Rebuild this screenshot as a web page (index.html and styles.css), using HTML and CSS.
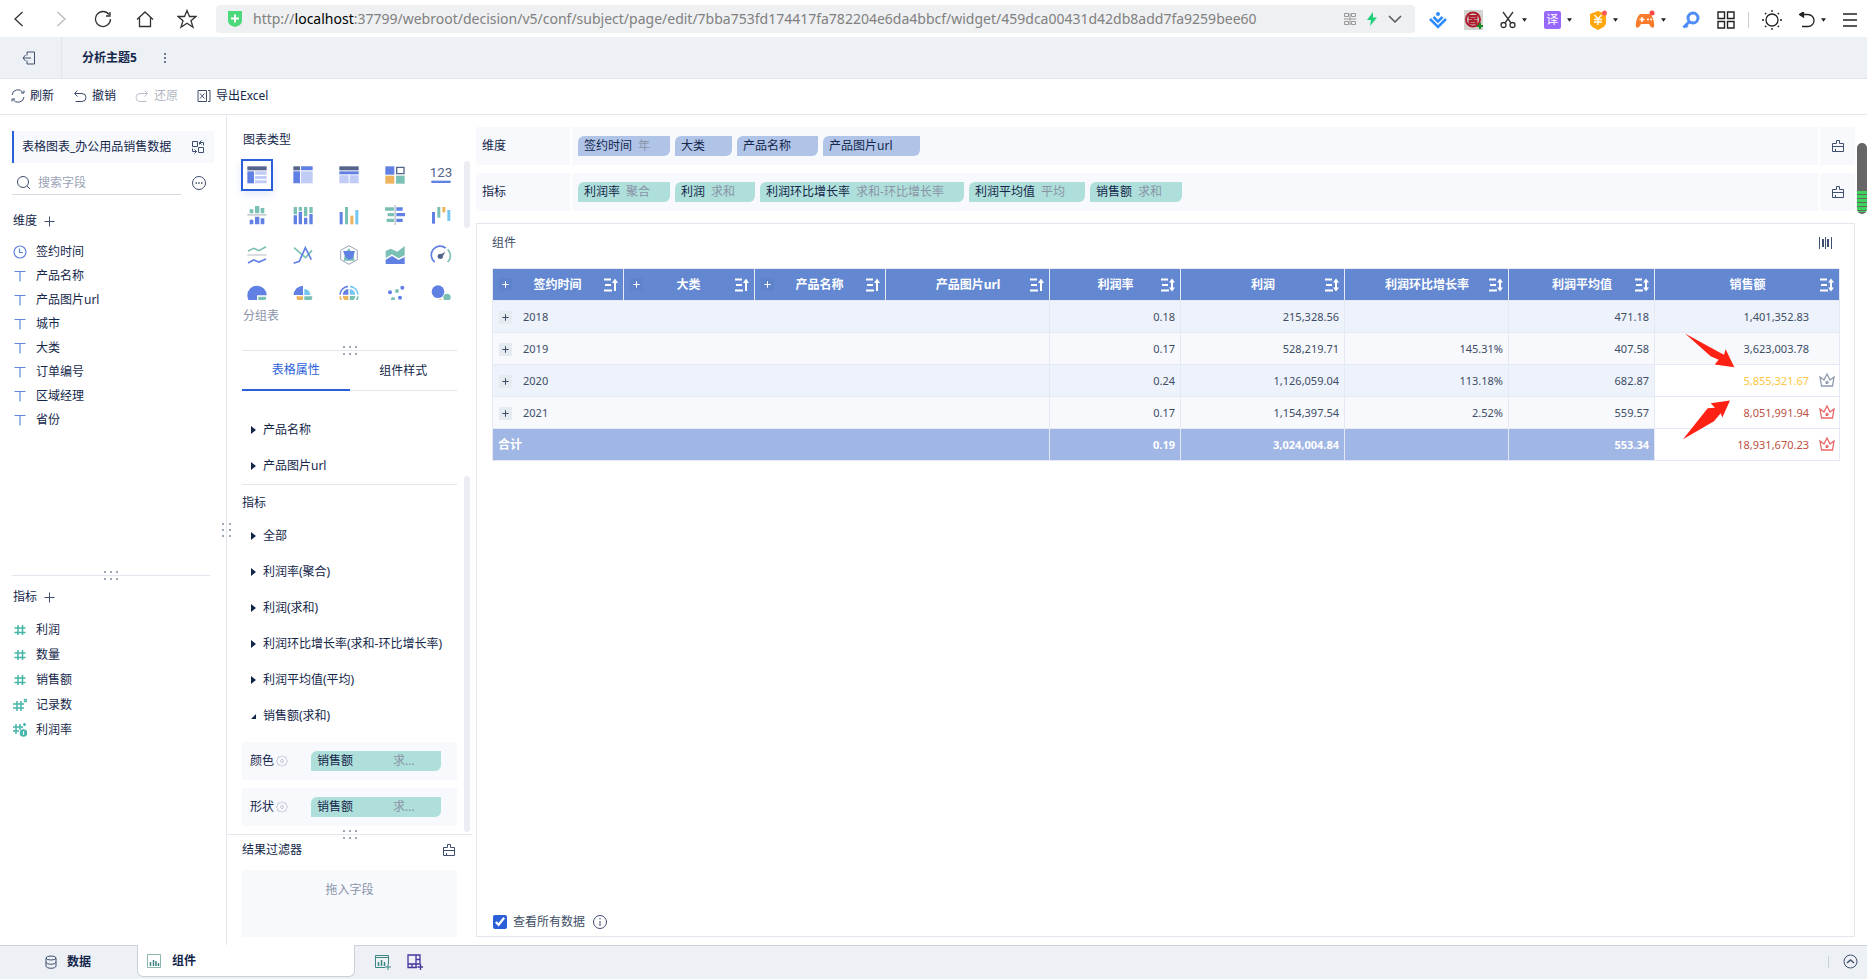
FILE: index.html
```html
<!DOCTYPE html>
<html lang="zh-CN">
	<head>
		<meta charset="UTF-8">
		<title>分析主题5</title>
		<link rel="stylesheet" href="styles.css">
	</head>
	<body>
		<svg class="sprite" aria-hidden="true">
			<symbol id="i-plus" viewBox="0 0 11 11"><path d="M5.500 .5v10M.5 5.500h10"/></symbol>
			<symbol id="i-caret" viewBox="0 0 6 4"><path d="M0 0h6L3 4z"/></symbol>
			<symbol id="i-brush" viewBox="0 0 14 14"><path d="M1.500 4.500h4v-3h3v3h4v8h-11zM1.500 7.500h11M4.500 10v2.500"/></symbol>
			<symbol id="i-text" viewBox="0 0 14 14"><path d="M1.500 2.500h11M7 2.500v10"/></symbol>
			<symbol id="i-num" viewBox="0 0 14 14"><path d="M5 2v10M9.500 2v10M1.500 5h11M1.500 9.500h11"/></symbol>
			<symbol id="i-dots" viewBox="0 0 14 9"><path d="M0 1h2M6 1h2M12 1h2M0 8h2M6 8h2M12 8h2"/></symbol>
			<symbol id="i-gear" viewBox="0 0 12 12"><path d="M6 .5l1.500 1.500h2.500l.5 2.500L11.500 6l-1 1.500L10 10H7.500L6 11.500 4.500 10H2l-.5-2.500L.5 6l1-1.500L2 2h2.500z"/><circle cx="6" cy="6" r="1.500"/></symbol>
			<symbol id="i-asc" viewBox="0 0 15 14"><path d="M1 1.500h7M2 7h6M1 12.500h8M12 13V3"/><path class="tip" d="M9 5l3-4.500L15 5z"/></symbol>
			<symbol id="i-sort" viewBox="0 0 15 14"><path d="M1 1.500h7M2 7h6M1 12.500h8M12 11V3"/><path class="tip" d="M9 4.500L12 .5l3 4zM9 9.500l3 4 3-4z"/></symbol>
			<symbol id="i-crown" viewBox="0 0 16 14"><path d="M2.500 13L1 4l4 3 3-6 3 6 4-3-1.500 9z"/><circle cx="8" cy="9.500" r="1"/></symbol>
		</svg>

		<header class="browser">
			<nav class="nav">
				<button aria-label="后退"><svg width="18" height="18" viewBox="0 0 18 18"><path d="M12.500 2L5 9l7.500 7"/></svg></button>
				<button class="off" aria-label="前进"><svg width="18" height="18" viewBox="0 0 18 18"><path d="M5.500 2L13 9l-7.500 7"/></svg></button>
				<button aria-label="刷新页面"><svg width="18" height="18" viewBox="0 0 18 18"><path d="M15 4.500A7.500 7.500 0 1 0 16.500 9M16 2v4h-4"/></svg></button>
				<button aria-label="主页"><svg width="18" height="18" viewBox="0 0 18 18"><path d="M1 9.500L9 2l8 7.500M3.500 7.500v9h11v-9"/></svg></button>
				<button aria-label="收藏"><svg width="20" height="20" viewBox="0 0 20 20"><path d="M10 1.500l2.500 6H19l-5 4.200 2 6.600-6-4-6 4 2-6.600-5-4.200h6.500z"/></svg></button>
			</nav>
			<div class="address">
				<svg width="14" height="16" viewBox="0 0 14 16"><path fill="#4cd97b" d="M0 0h14v10c0 3-3 5-7 6-4-1-7-3-7-6z"/><path stroke="#fff" stroke-width="2" d="M7 3.500v8M3 7.500h8"/></svg>
				<p>http://<b>localhost</b>:37799/webroot/decision/v5/conf/subject/page/edit/7bba753fd174417fa782204e6da4bbcf/widget/459dca00431d42db8add7fa9259bee60</p>
				<svg width="12" height="12" viewBox="0 0 12 12" fill="none" stroke="#999"><path d="M.5.500h4v3h-4zM7.500.500h4v3h-4zM.5 8.500h4v3h-4zM7.500 8.500h4v3h-4zM0 6h12M6 0v12"/></svg>
				<svg width="10" height="14" viewBox="0 0 10 14"><path fill="#1fd07a" d="M6 0L0 8h4l-1 6 7-8.500H6z"/></svg>
				<svg width="14" height="14" viewBox="0 0 14 14" fill="none" stroke="#555" stroke-width="1.500"><path d="M1 4l6 6 6-6"/></svg>
			</div>
			<div class="tools">
				<button aria-label="下载"><svg width="18" height="18" viewBox="0 0 18 18" fill="none" stroke="#2e8bff" stroke-width="2.500"><path d="M1 8l8 8 8-8M4.500 6L9 10.500 13.500 6"/><circle cx="9" cy="3" r="1" stroke-width="2"/></svg></button>
				<button aria-label="扩展"><svg width="19" height="20" viewBox="0 0 19 20"><path fill="#d3d3d0" d="M0 0h19v20H0z"/><circle cx="9" cy="9.500" r="7" fill="none" stroke="#b01c2e" stroke-width="2"/><path fill="none" stroke="#b01c2e" stroke-width="2" d="M5.500 6h7v2.500h-7zM5.500 11h7v2.500h-7zM9 8v3"/><path stroke="#188a23" stroke-width="2" d="M16 13v6M13 16h6"/></svg></button>
				<button class="drop" aria-label="截图"><svg width="16" height="18" viewBox="0 0 16 18" fill="none" stroke="#333" stroke-width="1.300"><path d="M3 1l8 11M13 1L5 12"/><circle cx="3.500" cy="14" r="2.500"/><circle cx="12.500" cy="14" r="2.500"/></svg><svg class="caret"><use href="#i-caret"/></svg></button>
				<button class="drop" aria-label="翻译"><span class="trans">译</span><svg class="caret"><use href="#i-caret"/></svg></button>
				<button class="drop" aria-label="优惠"><svg width="18" height="20" viewBox="0 0 18 20"><path fill="#ffa60d" d="M9 1l8 3v9c0 3-4 5-8 7-4-2-8-4-8-7V4z"/><path fill="none" stroke="#fff" stroke-width="1.400" d="M5.500 5L9 9l3.500-4M5 9.500h8M5 12h8M9 9v6"/><circle cx="15.500" cy="3" r="2.500" fill="#ff5a5a"/></svg><svg class="caret"><use href="#i-caret"/></svg></button>
				<button class="drop" aria-label="游戏"><svg width="20" height="20" viewBox="0 0 20 20"><path fill="#fb7b2c" d="M6 4h8c3 0 6 8 5 13-2 2-4-1-5-3H6c-1 2-3 5-5 3C0 12 3 4 6 4z"/><path stroke="#fff" stroke-width="1.500" d="M7 7v5M4.500 9.500h5M12 9.500h2M15 9.500h2"/><circle cx="17" cy="3" r="2.500" fill="#f44"/></svg><svg class="caret"><use href="#i-caret"/></svg></button>
				<button aria-label="密码"><svg width="18" height="18" viewBox="0 0 18 18" fill="none" stroke="#4d8df5" stroke-width="3"><circle cx="11" cy="7" r="5"/><path d="M7.500 10.500l-6 6M3.500 14l2 2"/></svg></button>
				<button aria-label="应用"><svg width="18" height="18" viewBox="0 0 18 18" fill="none" stroke="#222" stroke-width="1.400"><path d="M1 1h6.500v6.500H1zM10.500 1H17v6.500h-6.500zM1 10.500h6.500V17H1zM10.500 10.500H17V17h-6.500z"/></svg></button>
				<i class="bar"></i>
				<button aria-label="主题"><svg width="20" height="20" viewBox="0 0 20 20" fill="none" stroke="#222" stroke-width="1.300"><circle cx="10" cy="10" r="6"/><path d="M10 0v2M10 18v2M0 10h2M18 10h2M3 3l1.300 1.300M15.700 15.700L17 17M3 17l1.300-1.300M15.700 4.300L17 3"/></svg></button>
				<button class="drop" aria-label="恢复"><svg width="16" height="16" viewBox="0 0 16 16" fill="none" stroke="#222" stroke-width="1.300"><path d="M2 2.500h7a6 6 0 0 1 0 12H3"/><path fill="#222" d="M4.500 0v5L.5 2.500z"/></svg><svg class="caret"><use href="#i-caret"/></svg></button>
				<button aria-label="菜单"><svg width="14" height="14" viewBox="0 0 14 14" stroke="#222" stroke-width="1.300"><path d="M0 1h14M0 7h14M0 13h14"/></svg></button>
			</div>
		</header>

		<div class="titlebar">
			<button class="exit" aria-label="退出"><svg class="line" width="14" height="14" viewBox="0 0 14 14"><path d="M5 4.500V1h7.500v12H5V9.500M9 7H1M3.500 4L1 7l2.500 3"/></svg></button>
			<h1>分析主题5</h1>
			<button aria-label="更多"><svg class="line" width="4" height="10" viewBox="0 0 4 10"><path stroke-width="1.500" d="M1 1h2M1 5h2M1 9h2"/></svg></button>
		</div>

		<div class="toolbar">
			<button><svg class="line" width="14" height="14" viewBox="0 0 14 14"><path d="M1 6a6 6 0 0 1 11-2.500M13 1.500V4h-3M13 8a6 6 0 0 1-11 2.500M1 12.500V10h3"/></svg>刷新</button>
			<button><svg class="line" width="14" height="14" viewBox="0 0 14 14"><path d="M4.500 1.500l-3 3 3 3M2 4.500h7a4 4 0 0 1 0 8H2.500"/></svg>撤销</button>
			<button disabled><svg class="line" width="14" height="14" viewBox="0 0 14 14"><path d="M9.500 1.500l3 3-3 3M12 4.500H5a4 4 0 0 0 0 8h6.500"/></svg>还原</button>
			<button><svg class="line" width="14" height="14" viewBox="0 0 14 14"><path d="M1 1.500h8.500v11H1zM3 4.500l4.500 5M7.500 4.500l-4.500 5M11 1.500h2v11h-2"/></svg>导出Excel</button>
		</div>

		<div class="work">
			<aside class="fields">
				<section class="dims">
					<div class="source">表格图表_办公用品销售数据
						<svg class="line" width="14" height="14" viewBox="0 0 14 14"><path d="M1.500 1.500h5v5h-5zM7.500 7.500h5v5h-5zM8.500 4.500v-2h4v3M10.500 .5l-2 2 2 2M5.500 11.500h-4v-3M3.500 9.500l2 2-2 2"/></svg>
					</div>
					<div class="search">
						<label><svg class="line" width="15" height="15" viewBox="0 0 15 15"><circle cx="7" cy="7" r="5.500"/><path d="M11 11l3 3"/></svg><input type="text" placeholder="搜索字段" aria-label="搜索字段"></label>
						<button aria-label="更多"><svg class="line" width="14" height="14" viewBox="0 0 14 14"><circle cx="7" cy="7" r="6.500"/><path stroke-width="1.500" d="M3.500 7H5M6.200 7h1.500M9 7h1.500"/></svg></button>
					</div>
					<h2>维度<button aria-label="添加维度"><svg class="line" width="11" height="11"><use href="#i-plus"/></svg></button></h2>
					<ul>
						<li><svg viewBox="0 0 14 14"><circle cx="7" cy="7" r="6"/><path d="M6.500 3.500v4H10"/></svg>签约时间</li>
						<li><svg><use href="#i-text"/></svg>产品名称</li>
						<li><svg><use href="#i-text"/></svg>产品图片url</li>
						<li><svg><use href="#i-text"/></svg>城市</li>
						<li><svg><use href="#i-text"/></svg>大类</li>
						<li><svg><use href="#i-text"/></svg>订单编号</li>
						<li><svg><use href="#i-text"/></svg>区域经理</li>
						<li><svg><use href="#i-text"/></svg>省份</li>
					</ul>
				</section>
				<div class="split"><svg><use href="#i-dots"/></svg></div>
				<section class="nums">
					<h2>指标<button aria-label="添加指标"><svg class="line" width="11" height="11"><use href="#i-plus"/></svg></button></h2>
					<ul>
						<li><svg><use href="#i-num"/></svg>利润</li>
						<li><svg><use href="#i-num"/></svg>数量</li>
						<li><svg><use href="#i-num"/></svg>销售额</li>
						<li><svg viewBox="0 0 14 14"><path d="M4 3v10M8 3v10M0 6h11M0 10h11M11 1l3 3M14 1l-3 3"/></svg>记录数</li>
						<li><svg viewBox="0 0 14 14"><path d="M3 1v10M7 1v6M0 4h10M0 8h6M11.500 0v3M10 1.500h3"/><circle class="dot" cx="10.500" cy="10" r="3"/><path class="cut" d="M11 8l-1 2h1l-1 2"/></svg>利润率</li>
					</ul>
				</section>
				<svg class="grip" viewBox="0 0 9 14"><path d="M0 1h2M7 1h2M0 7h2M7 7h2M0 13h2M7 13h2"/></svg>
			</aside>

			<aside class="config">
				<section class="charts">
					<h2>图表类型</h2>
					<div class="grid">
						<button class="on" aria-label="分组表"><svg viewBox="0 0 60 60"><path class="k" d="M1 4h58v12H1z"/><path class="b" d="M1 19h20v36H1z"/><path class="l" d="M24 19h35v10H24zM24 33h35v9H24zM24 46h35v9H24z"/></svg></button>
						<button aria-label="交叉表"><svg viewBox="0 0 60 60"><path class="k" d="M1 4h20v12H1z"/><path class="b" d="M24 4h35v12H24zM1 19h20v36H1z"/><path class="l" d="M24 19h35v36H24z"/></svg></button>
						<button aria-label="明细表"><svg viewBox="0 0 60 60"><path class="k" d="M1 4h58v12H1z"/><path class="b" d="M1 19h58v9H1z"/><path class="l" d="M1 31h28v24H1zM32 31h27v24H32z"/></svg></button>
						<button aria-label="颜色表格"><svg viewBox="0 0 60 60"><path class="b" d="M1 4h27v25H1z"/><path class="sk" d="M35 7h22v19H35z"/><path class="o" d="M1 32h27v24H1z"/><path class="g" d="M33 32h26v24H33z"/></svg></button>
						<button aria-label="指标卡"><svg viewBox="0 0 60 60"><text x="30" y="37" text-anchor="middle">123</text><path class="b" d="M1 47h58v7H1z"/></svg></button>

						<button aria-label="对比柱状图"><svg viewBox="0 0 60 60"><path class="g" d="M8 13h11v12H8zM24 3h13v22H24zM41 9h11v16H41z"/><path class="n" d="M1 27h58v5H1z"/><path class="b" d="M8 44h11v14H8zM24 35h13v23H24zM41 40h11v18H41z"/></svg></button>
						<button aria-label="堆积柱状图"><svg viewBox="0 0 60 60"><path class="g" d="M2 6h10v22H2zM17 6h10v11H17zM33 6h10v28H33zM49 6h10v18H49z"/><path class="b" d="M2 31h10v27H2zM17 20h10v38H17zM33 38h10v20H33zM49 27h10v31H49z"/></svg></button>
						<button aria-label="多系列柱状图"><svg viewBox="0 0 60 60"><path class="b" d="M2 21h9v37H2z"/><path class="g" d="M18 6h9v52h-9z"/><path class="o" d="M34 32h9v26h-9z"/><path class="s" d="M49 15h9v43h-9z"/></svg></button>
						<button aria-label="对比条形图"><svg viewBox="0 0 60 60"><path class="g" d="M0 7h27v10H0zM8 24h19v10H8zM5 41h22v10H5z"/><path class="b" d="M34 7h19v10H34zM34 24h26v10H34zM34 41h19v10H34z"/><path class="n" d="M28 0h5v60h-5z"/></svg></button>
						<button aria-label="瀑布图"><svg viewBox="0 0 60 60"><path class="b" d="M3 21h9v35H3z"/><path class="g" d="M19 6h9v32h-9z"/><path class="o" d="M34 6h9v16h-9z"/><path class="s" d="M49 15h9v33h-9z"/></svg></button>

						<button aria-label="对比折线图"><svg viewBox="0 0 60 60"><path class="sg" d="M3 18l17-8 16 7L57 5"/><path class="n" d="M1 28h58v4H1z"/><path class="sb" d="M3 54l17-9 16 6 21-9"/></svg></button>
						<button aria-label="折线图"><svg viewBox="0 0 60 60"><path class="sg" d="M3 8l35 30 19-22"/><path class="sb" d="M2 55l17-6 18-41 18 36"/></svg></button>
						<button aria-label="雷达图"><svg viewBox="0 0 60 60"><path class="sn" d="M30 2l25 14v28L30 58 5 44V16z"/><path class="g" d="M30 10l7 10 5 4 5 23H14l4-23z"/><path class="b" d="M12 18h36l-6 20-12 7-10-8z"/></svg></button>
						<button aria-label="面积图"><svg viewBox="0 0 60 60"><path class="g" d="M2 18l15-7 20 9L59 3v28l-18 9-20-12-19 11z"/><path class="b" d="M2 44l19-11 20 12 18-9v21H2z"/></svg></button>
						<button aria-label="仪表盘"><svg viewBox="0 0 60 60"><path class="sb" d="M11 51a26 26 0 0 1 33-42"/><path class="sg" d="M50 13a26 26 0 0 1 0 38"/><circle class="k" cx="28" cy="34" r="8"/><path class="k" d="M30 28l13-8-7 13z"/></svg></button>

						<button aria-label="饼图"><svg viewBox="0 0 60 60"><path class="b" d="M30 31h29A29 29 0 1 0 30 60z"/><path class="g" d="M34 35h24a26 26 0 0 1-24 24z"/></svg></button>
						<button aria-label="玫瑰图"><svg viewBox="0 0 60 60"><path class="b" d="M30 2v28H2A28 28 0 0 1 30 2z"/><path class="s" d="M34 12a18 18 0 0 1 18 18H34z"/><path class="o" d="M10 34h20v20a20 20 0 0 1-20-20z"/><path class="g" d="M34 34h24a24 24 0 0 1-24 24z"/></svg></button>
						<button aria-label="多层饼图"><svg viewBox="0 0 60 60"><path class="b" d="M28 12v17H11a18 18 0 0 1 17-17z"/><path class="s" d="M32 12v17h17a18 18 0 0 0-17-17z"/><path class="o" d="M11 33h17v17a18 18 0 0 1-17-17z"/><path class="g" d="M32 33h17a18 18 0 0 1-17 17z"/><path class="sb" d="M3 29A27 27 0 0 1 27 4"/><path class="ss" d="M33 4a27 27 0 0 1 24 25"/><path class="so" d="M3 34a27 27 0 0 0 24 24"/><path class="sg" d="M57 34a27 27 0 0 1-24 24"/></svg></button>
						<button aria-label="散点图"><svg viewBox="0 0 60 60"><g class="b"><circle cx="15" cy="22" r="6"/><circle cx="52" cy="8" r="6"/><circle cx="45" cy="38" r="6"/></g><g class="g"><circle cx="36" cy="18" r="6"/><circle cx="24" cy="42" r="6"/></g></svg></button>
						<button aria-label="聚合气泡图"><svg viewBox="0 0 60 60"><circle class="b" cx="21" cy="20" r="19"/><circle class="g" cx="48" cy="37" r="11"/><circle class="o" cx="28" cy="52" r="9"/></svg></button>
					</div>
					<p>分组表</p>
					<i class="scroll"></i>
				</section>
				<div class="split"><svg><use href="#i-dots"/></svg></div>
				<div class="tabs">
					<button class="on">表格属性</button>
					<button>组件样式</button>
				</div>
				<section class="props">
					<div class="tree">
						<button>产品名称</button>
						<button>产品图片url</button>
					</div>
					<h2>指标</h2>
					<div class="tree">
						<button>全部</button>
						<button>利润率(聚合)</button>
						<button>利润(求和)</button>
						<button>利润环比增长率(求和-环比增长率)</button>
						<button>利润平均值(平均)</button>
						<button class="open">销售额(求和)</button>
					</div>
					<div class="attr">颜色<svg><use href="#i-gear"/></svg><span class="pill num">销售额<em>求...</em></span></div>
					<div class="attr">形状<svg><use href="#i-gear"/></svg><span class="pill num">销售额<em>求...</em></span></div>
					<i class="scroll"></i>
				</section>
				<div class="split wide"><svg><use href="#i-dots"/></svg></div>
				<section class="filter">
					<h2>结果过滤器<button aria-label="清空"><svg class="line" width="14" height="14"><use href="#i-brush"/></svg></button></h2>
					<div class="dropzone">拖入字段</div>
				</section>
			</aside>

			<main>
				<div class="shelf">
					<h2>维度</h2>
					<div class="pills">
						<span class="pill">签约时间<em>年</em></span>
						<span class="pill">大类<em></em></span>
						<span class="pill">产品名称<em></em></span>
						<span class="pill">产品图片url<em></em></span>
					</div>
					<button aria-label="清空维度"><svg class="line" width="14" height="14"><use href="#i-brush"/></svg></button>
				</div>
				<div class="shelf">
					<h2>指标</h2>
					<div class="pills">
						<span class="pill num">利润率<em>聚合</em></span>
						<span class="pill num">利润<em>求和</em></span>
						<span class="pill num">利润环比增长率<em>求和-环比增长率</em></span>
						<span class="pill num">利润平均值<em>平均</em></span>
						<span class="pill num">销售额<em>求和</em></span>
					</div>
					<button aria-label="清空指标"><svg class="line" width="14" height="14"><use href="#i-brush"/></svg></button>
				</div>

				<section class="widget">
					<div class="head">
						<h2>组件</h2>
						<button aria-label="列宽"><svg class="line" width="14" height="12" viewBox="0 0 14 12"><path d="M.5 0v12M6.500 0v12M12.500 0v12"/><path stroke-width="2" d="M4 2v8M9 2v8"/></svg></button>
					</div>
					<div class="sheet">
						<table>
							<colgroup>
								<col class="w1"><col class="w1"><col class="w1"><col class="w2"><col class="w1"><col class="w2"><col class="w2"><col class="w3"><col class="w4">
							</colgroup>
							<thead>
								<tr>
									<th><div><button class="exp" aria-label="展开"><svg><use href="#i-plus"/></svg></button>签约时间<svg class="sort"><use href="#i-asc"/></svg></div></th>
									<th><div><button class="exp" aria-label="展开"><svg><use href="#i-plus"/></svg></button>大类<svg class="sort"><use href="#i-asc"/></svg></div></th>
									<th><div><button class="exp" aria-label="展开"><svg><use href="#i-plus"/></svg></button>产品名称<svg class="sort"><use href="#i-asc"/></svg></div></th>
									<th><div><i></i>产品图片url<svg class="sort"><use href="#i-asc"/></svg></div></th>
									<th><div><i></i>利润率<svg class="sort"><use href="#i-sort"/></svg></div></th>
									<th><div><i></i>利润<svg class="sort"><use href="#i-sort"/></svg></div></th>
									<th><div><i></i>利润环比增长率<svg class="sort"><use href="#i-sort"/></svg></div></th>
									<th><div><i></i>利润平均值<svg class="sort"><use href="#i-sort"/></svg></div></th>
									<th><div><i></i>销售额<svg class="sort"><use href="#i-sort"/></svg></div></th>
								</tr>
							</thead>
							<tbody>
								<tr><td colspan="4"><button class="exp" aria-label="展开"><svg><use href="#i-plus"/></svg></button>2018</td><td>0.18</td><td>215,328.56</td><td></td><td>471.18</td><td class="sale">1,401,352.83</td></tr>
								<tr><td colspan="4"><button class="exp" aria-label="展开"><svg><use href="#i-plus"/></svg></button>2019</td><td>0.17</td><td>528,219.71</td><td>145.31%</td><td>407.58</td><td class="sale">3,623,003.78</td></tr>
								<tr><td colspan="4"><button class="exp" aria-label="展开"><svg><use href="#i-plus"/></svg></button>2020</td><td>0.24</td><td>1,126,059.04</td><td>113.18%</td><td>682.87</td><td class="sale mid">5,855,321.67<svg><use href="#i-crown"/></svg></td></tr>
								<tr><td colspan="4"><button class="exp" aria-label="展开"><svg><use href="#i-plus"/></svg></button>2021</td><td>0.17</td><td>1,154,397.54</td><td>2.52%</td><td>559.57</td><td class="sale top">8,051,991.94<svg><use href="#i-crown"/></svg></td></tr>
							</tbody>
							<tfoot>
								<tr><td colspan="4">合计</td><td>0.19</td><td>3,024,004.84</td><td></td><td>553.34</td><td class="sale top">18,931,670.23<svg><use href="#i-crown"/></svg></td></tr>
							</tfoot>
						</table>
						<!-- 标注箭头 -->
						<svg class="arrows" viewBox="0 0 156 320"><path d="M18 1l104 57 13 7 5-17 26 54-59-8 12-14L95 69z"/><path d="M12 318l74-93 22-1-13-14 58-8-23 51-5-13-20 24z"/></svg>
					</div>
					<div class="foot">
						<label><input type="checkbox" checked>查看所有数据</label>
						<svg class="line" width="14" height="14" viewBox="0 0 14 14"><circle cx="7" cy="7" r="6.500"/><path d="M7 6v5M7 3v1.500"/></svg>
					</div>
				</section>
				<i class="meter"></i>
			</main>
		</div>

		<footer class="sheets">
			<button class="data"><svg class="line" width="12" height="14" viewBox="0 0 12 14"><ellipse cx="6" cy="3" rx="5" ry="2"/><path d="M1 3v8c0 3 10 3 10 0V3M1 7c0 3 10 3 10 0"/></svg>数据</button>
			<button class="cur"><svg width="14" height="14" viewBox="0 0 14 14" fill="none" stroke="#3c8580"><path stroke="#8db5b0" d="M.5.500h13v13H.5z"/><path stroke-width="1.500" d="M3.500 12V8M6.500 12V6M9 12V7M11.500 12V9"/></svg>组件</button>
			<button class="add" aria-label="添加组件"><svg width="16" height="16" viewBox="0 0 16 16" fill="none" stroke="#3c8580"><path d="M10 13.500H.5V1.500h13V10M.5 3.500h13M13 10v6M10 13h6"/><path stroke-width="1.500" d="M3.500 12V8M6.500 12V6M9.500 12V8"/></svg></button>
			<button class="add" aria-label="添加仪表板"><svg width="16" height="16" viewBox="0 0 16 16" fill="none" stroke="#45349f" stroke-width="1.300"><path d="M10 13.500H1V1h12v9M9 1v12.500M1 10h12M9 5.500h4M5 10v3.500M13.500 10v6M10.500 13h6"/></svg></button>
			<button class="fold" aria-label="收起"><svg class="line" width="15" height="15" viewBox="0 0 15 15"><circle cx="7.500" cy="7.500" r="6.500"/><path stroke-width="1.500" d="M4 9l3.500-3L11 9"/></svg></button>
		</footer>
	</body>
</html>
```
FILE: styles.css
```css
*{margin:0;padding:0;box-sizing:border-box;}
ul{list-style:none;}
em,i{font-style:normal;}
svg{display:block;flex:none;}
button{border:0;background:none;color:inherit;font:inherit;display:flex;align-items:center;justify-content:center;cursor:pointer;}
body{display:flex;flex-direction:column;min-height:100vh;font:12px/16px "Noto Sans","Noto Sans CJK SC",sans-serif;color:#14274b;background:#fff;}
h1,h2{font-size:12px;font-weight:normal;}
.sprite{position:absolute;width:0;height:0;}
.line{fill:none;stroke:#3f506f;stroke-width:1;}

/* 浏览器栏 */
.browser{display:flex;align-items:center;height:37px;padding:0 10px 0 9px;}
.nav{display:flex;gap:22px;width:207px;flex:none;}
.nav button{width:20px;height:20px;}
.nav svg{fill:none;stroke:#333;stroke-width:1.3;}
.nav .off svg{stroke:#bbb;}
.address{flex:1;display:flex;align-items:center;height:28px;gap:11px;padding:0 13px 0 12px;background:#eff0f2;border-radius:4px;color:#808080;min-width:0;}
.address p{flex:1;font:14px/28px "Noto Sans",sans-serif;white-space:nowrap;overflow:hidden;}
.address b{font-weight:normal;color:#000;}
.tools{display:flex;align-items:center;width:442px;padding:2px 0 0 14px;justify-content:space-between;flex:none;}
.tools .drop{gap:6px;}
.caret{width:5px;height:4px;fill:#222;}
.trans{width:17px;height:18px;background:#9867fb;color:#fff;border-radius:2px;font-size:12px;line-height:17px;}
.bar{width:1px;height:16px;margin:0 -4px;background:#ccc;}

.titlebar{display:flex;align-items:center;height:42px;background:#edf0f5;border-bottom:1px solid #e1e4ec;}
.titlebar .exit{width:62px;height:100%;border-right:1px solid #e1e4ec;padding-right:3px;}
.titlebar h1{font-weight:bold;margin:0 26px 0 20px;}
.toolbar{display:flex;align-items:center;gap:19px;height:36px;padding:0 11px 2px;border-bottom:1px solid #e4e6ee;}
.toolbar button{gap:5px;}
.toolbar button:disabled{opacity:.35;}

.work{flex:1;display:flex;}
.scroll{position:absolute;right:6px;width:6px;border-radius:3px;background:#ecedf2;}
.split{position:relative;height:1px;background:#e4e6ee;}
.split svg{position:absolute;left:50%;top:-4px;width:14px;height:9px;margin-left:-7px;}
.split svg,.grip{fill:none;stroke:#3f506f;stroke-width:1;}

/* 字段 */
.fields{position:relative;width:227px;flex:none;display:flex;flex-direction:column;padding:16px 12px 0;border-right:1px solid #e4e6ee;}
.fields .dims{flex:444 0 0;}
.fields .nums{flex:356 0 0;padding-top:13px;}
.fields .split{margin-right:4px;}
.source{display:flex;align-items:center;justify-content:space-between;height:32px;padding:0 9px 0 8px;border-left:2px solid #2b5fd9;background:#f7f9fd;}
.search{display:flex;align-items:flex-end;justify-content:space-between;height:32px;padding-right:8px;}
.search label{display:flex;align-items:center;width:169px;height:24px;gap:7px;padding-left:4px;border-bottom:1px solid #d9d9e6;}
.search input{width:130px;border:0;outline:0;background:none;font:inherit;color:inherit;}
.search input::placeholder{color:#9aa3b5;}
.search button{height:24px;}
.fields h2{display:flex;align-items:center;gap:7px;padding-left:1px;}
.fields .dims h2{margin:18px 0 11px;}
.fields li{display:flex;align-items:center;gap:9px;height:24px;padding-left:1px;}
.fields li svg{width:14px;height:14px;fill:none;stroke:#6288da;stroke-width:1.2;}
.fields .nums ul{margin-top:12px;}
.fields .nums li{height:25px;}
.fields .nums li svg{stroke:#45b5a8;stroke-width:1.5;}
.fields .dot{fill:#45b5a8;}
.fields .nums .cut{stroke:#fff;stroke-width:1;}
.grip{position:absolute;right:-5px;top:50%;width:9px;height:14px;margin-top:-7px;}

/* 图表类型与属性 */
.config{width:249px;flex:none;display:flex;flex-direction:column;}
.charts{position:relative;height:235px;padding:17px 19px 0 16px;}
.grid{display:grid;grid-template-columns:repeat(5,46px);grid-auto-rows:40px;height:145px;margin:7px 0 0 -9px;overflow:hidden;}
.grid button{width:32px;height:32px;margin:4px 7px;border:2px solid transparent;}
.grid .on{border-color:#2b5fd9;box-shadow:0 4px 8px #2b5fd920;}
.grid svg{width:20px;height:20px;overflow:visible;}
.grid text{font:40px Roboto,sans-serif;fill:#54648a;}
.k{fill:#54648a;}
.b{fill:#6080e3;}
.l{fill:#c0ccf6;}
.o{fill:#eeb35e;}
.g{fill:#7bc0b4;}
.s{fill:#76c6f2;}
.n{fill:#c9cdd6;}
.sk,.sb,.sg,.so,.ss,.sn{fill:none;stroke-width:5;}
.sk{stroke:#54648a;stroke-width:4;}
.sb{stroke:#6080e3;}
.sg{stroke:#7bc0b4;}
.so{stroke:#eeb35e;}
.ss{stroke:#76c6f2;}
.sn{stroke:#9ba3b8;stroke-width:3;}
.charts p{color:#8a94a8;margin-top:8px;}
.charts .scroll{top:46px;height:67px;}
.config .split{margin:0 19px 0 15px;}
.config .wide{margin:0 4px 0 0;}
.tabs{display:flex;margin:0 19px 0 15px;height:40px;}
.tabs button{flex:1;border-bottom:1px solid #e4e6ee;}
.tabs .on{color:#2b5fd9;border-bottom:2px solid #2b5fd9;}
.props{position:relative;flex:1;padding:21px 19px 0 15px;}
.props .scroll{top:85px;bottom:2px;}
.props h2{border-top:1px solid #e4e6ee;padding:10px 0 7px;}
.tree button{height:36px;padding-left:9px;gap:7px;}
.tree button::before{content:"";border-left:5px solid #14274b;border-top:4px solid transparent;border-bottom:4px solid transparent;}
.tree .open::before{width:0;border-left:5px solid transparent;border-top:0;border-bottom:5px solid #14274b;}
.attr{display:flex;align-items:center;height:38px;margin:8px 0;padding:0 16px 0 8px;background:#f7f9fd;}
.attr svg{width:12px;height:12px;margin-left:2px;fill:none;stroke:#c3c9d6;}
.attr .pill{width:130px;margin-left:auto;}
.attr .pill em{margin-left:40px;}
.filter{padding:7px 19px 0 15px;}
.filter h2{display:flex;justify-content:space-between;padding-right:1px;}
.dropzone{height:67px;margin:12px 0 8px;padding-top:12px;text-align:center;background:#f7f9fd;color:#8a94a8;}
.pill{display:flex;align-items:center;height:20px;padding:0 20px 1px 6px;background:#b0c4e8;border-radius:6px 0 6px 0;white-space:nowrap;}
.pill em{min-width:1px;margin-left:6px;color:#8a94a8;}
.pill.num{background:#afdfda;}

/* 组件区 */
main{position:relative;flex:1;min-width:0;display:flex;flex-direction:column;padding:12px 12px 8px 0;}
.shelf{display:flex;height:38px;margin-bottom:8px;}
.shelf h2{width:96px;padding:11px 6px;background:#f7f9fd;border-right:2px solid #fff;}
.shelf .pills{flex:1;display:flex;align-items:center;gap:5px;padding-left:6px;background:#f7f9fd;}
.shelf button{width:37px;background:#f7f9fd;border-left:2px solid #fff;}
.widget{flex:1;display:flex;flex-direction:column;margin-top:4px;padding:0 18px 0 15px;border:1px solid #e4e6ee;}
.widget .head{display:flex;align-items:center;justify-content:space-between;height:38px;margin-bottom:6px;padding-right:3px;}
.widget h2{color:#3d4d66;}
.sheet{position:relative;flex:1;}
table{width:100%;table-layout:fixed;border-collapse:collapse;color:#3d4d66;}
.w1{width:131px;}
.w2{width:164px;}
.w3{width:146px;}
.w4{width:185px;}
th,td{height:32px;border:1px solid #e5e9f5;}
th{background:#6388d1;color:#fff;}
th div{display:flex;align-items:center;justify-content:space-between;padding:0 5px 0 6px;}
th i{width:15px;}
.exp{display:inline-flex;width:13px;height:13px;background:#e6eaf1;vertical-align:middle;}
th .exp{background:#5e83cb;}
.exp svg{width:7px;height:7px;stroke:#3d4d66;stroke-width:1.6;}
th .exp svg{stroke:#fff;}
.sort{width:15px;height:14px;fill:none;stroke:#fff;stroke-width:2;}
.tip{fill:#fff;stroke:none;}
td{padding:0 5px;text-align:right;font-size:11px;background:#f7f9fd;}
td:first-child{text-align:left;}
tbody td:first-child{padding-left:6px;}
td .exp{margin-right:11px;}
tbody tr:nth-child(odd) td{background:#eef3fb;}
tfoot td{background:#a0b6e4;color:#fff;font-weight:bold;}
tfoot td:first-child{font-size:12px;}
.sale{position:relative;padding-right:30px;}
.sale svg{position:absolute;right:4px;top:8px;width:16px;height:14px;fill:none;stroke:#8f9bb0;stroke-width:1.3;}
tbody tr td.mid,tbody tr td.top,tfoot td.top{background:#fff;font-weight:normal;}
.mid{color:#fdc53f;}
tfoot td.top,.top{color:#bd5145;}
.top svg{stroke:#e66a6a;}
.arrows{position:absolute;right:105px;top:65px;width:52px;height:107px;fill:#ff2113;overflow:visible;}
.foot{display:flex;align-items:center;gap:8px;height:28px;padding-left:1px;color:#3d4d66;}
.foot label{display:flex;align-items:center;gap:6px;}
.foot input{width:14px;height:14px;accent-color:#2b5fd9;}
.meter{position:absolute;right:0;top:28px;width:10px;height:71px;border-radius:5px;background:linear-gradient(#666 48px,transparent 48px,transparent 69px,#666 69px),repeating-linear-gradient(#3fd35c 0 3px,#666 3px 4px);}

.sheets{display:flex;height:34px;background:#edf0f5;font-weight:bold;}
.sheets button{padding-bottom:2px;border-top:1px solid #ccd0d9;}
.sheets .data{width:137px;gap:10px;padding-right:1px;}
.sheets .cur{width:218px;height:32px;justify-content:flex-start;gap:11px;padding:0 0 0 9px;background:#fff;border:1px solid #ccd0d9;border-top:0;border-radius:0 0 6px 6px;}
.sheets .add{width:32px;}
.sheets .cur + .add{width:44px;padding-left:12px;}
.sheets .fold{flex:1;justify-content:flex-end;padding-right:9px;}
.sheets .fold::before{content:"";width:1px;height:12px;margin-right:14px;background:#ccd0d9;}
```
